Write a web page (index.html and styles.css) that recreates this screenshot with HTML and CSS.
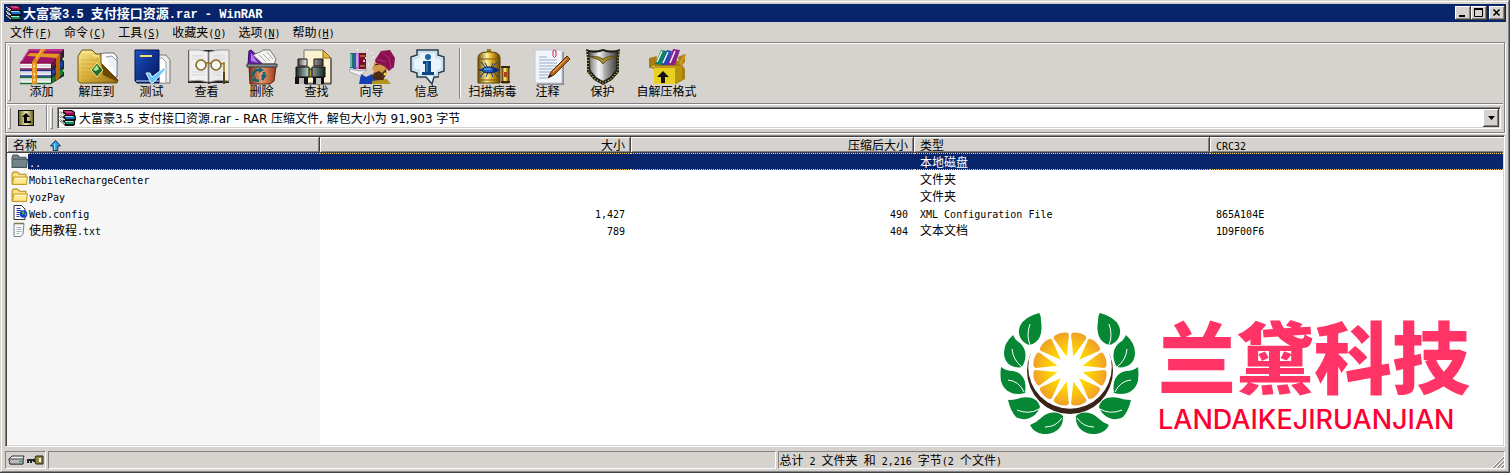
FILE: index.html
```html
<!DOCTYPE html>
<html lang="zh-CN">
<head>
<meta charset="utf-8">
<title>大富豪3.5 支付接口资源.rar - WinRAR</title>
<link rel="stylesheet" href="styles.css">
</head>
<body>
<svg class="defs" aria-hidden="true">
  <defs>
    <linearGradient id="gold" x1="0" y1="0" x2="1" y2="1"><stop offset="0" stop-color="#fbe68a"/><stop offset=".5" stop-color="#d9b13a"/><stop offset="1" stop-color="#8a6410"/></linearGradient>
    <linearGradient id="upbg" x1="0" y1="0" x2="1" y2="0"><stop offset="0" stop-color="#6b6428"/><stop offset=".5" stop-color="#f4edb4"/><stop offset="1" stop-color="#6b6428"/></linearGradient>
    <linearGradient id="blue" x1="0" y1="0" x2="1" y2="1"><stop offset="0" stop-color="#1a52c0"/><stop offset="1" stop-color="#03135c"/></linearGradient>
    <linearGradient id="clay"><stop offset="0" stop-color="#7c3014"/><stop offset=".45" stop-color="#ea9c72"/><stop offset="1" stop-color="#963a18"/></linearGradient>
    <linearGradient id="can"><stop offset="0" stop-color="#6f4a00"/><stop offset=".4" stop-color="#fff2a0"/><stop offset=".65" stop-color="#d9a41c"/><stop offset="1" stop-color="#5c3c00"/></linearGradient>
    <linearGradient id="steel"><stop offset="0" stop-color="#4c4c4c"/><stop offset=".35" stop-color="#f2f2f2"/><stop offset=".6" stop-color="#a4a4a4"/><stop offset="1" stop-color="#3c3c3c"/></linearGradient>
    <linearGradient id="barrel"><stop offset="0" stop-color="#1c2624"/><stop offset=".4" stop-color="#a9c4c0"/><stop offset="1" stop-color="#16201e"/></linearGradient>
    <radialGradient id="juice" gradientUnits="userSpaceOnUse" cx="70" cy="57" r="37"><stop offset="0" stop-color="#fff200"/><stop offset=".5" stop-color="#ffd500"/><stop offset="1" stop-color="#f0a02a"/></radialGradient>
    <symbol id="books" viewBox="0 0 18 18">
      <path d="M4 1H13L16 3V6L17 8V11L16 12V16L14 17H6L4 14Z" fill="#111"/>
      <path d="M4 2H12L15 4H7Z" fill="#d8388c"/><path d="M7 4H15V6H7Z" fill="#a00050"/>
      <path d="M6 7H15L16 10H7Z" fill="#1673c8"/><path d="M6 7H14V8H6Z" fill="#9fdcff"/>
      <path d="M6 12H15V15H7Z" fill="#149068"/><path d="M6 12H14V13H6Z" fill="#9ff0d0"/>
      <path d="M1 3L6 6M1 7L6 11M1 11L6 15" stroke="#222" stroke-width="2"/>
      <path d="M1 3L6 6M1 7L6 11M1 11L6 15M2 5L5 7M2 9L5 11" stroke="#fff"/>
    </symbol>
    <symbol id="folder" viewBox="0 0 16 14">
      <path d="M1 3L2 1H6L8 3H14V12H1Z" fill="#fce38a" stroke="#b98a1c"/>
      <path d="M2.500 5.500H15.500L14.500 12.500H1.500Z" fill="#ffe98f" stroke="#c99a26"/><path d="M4 7H14" stroke="#fffbd8"/>
    </symbol>
    <path id="wedge" d="M70 44L62.300 24Q61.600 21.800 64 20.800Q70 18.600 76 20.800Q78.400 21.800 77.700 24Z"/>
    <g id="leaves">
      <path d="M39 1Q41 3 41 9C43 21 40 31 29 33C20 30 17 21 20 14Q24 5 39 1Z"/>
      <path d="M13 23Q15 28 20 31C27 37 27 47 22 55C12 57 4 51 4 41Q4 31 13 23Z"/>
      <path d="M1 55Q6 59 13 59C23 61 27 69 25 81C14 84 4 80 1 69Q0 62 1 55Z"/>
      <path d="M8 88Q15 88 20 86C29 84 38 86 40 95C36 106 25 110 16 105Q11 100 8 88Z"/>
      <path d="M30 113Q36 111 41 106C48 99 59 99 63 104C64 116 54 123 43 122Q34 121 30 113Z"/>
      <path d="M30 33Q26 23 30 12M22 55Q13 48 12 37M24 80Q19 69 8 68M39 97Q29 103 17 98M62 106Q56 115 45 115" fill="none" stroke="#fff" stroke-width="1"/>
    </g>
  </defs>
</svg>
<main class="window">
  <header class="titlebar">
    <svg class="app-icon"><use href="#books"/></svg>
    <h1>大富豪<span class="lt">3.5 </span>支付接口资源<span class="lt">.rar - WinRAR</span></h1>
    <div class="controls">
      <button aria-label="最小化"><svg viewBox="0 0 16 14"><path d="M4 10H10" stroke="#000" stroke-width="2"/></svg></button>
      <button aria-label="最大化"><svg viewBox="0 0 16 14"><path d="M3.500 2V10.500H11.500V2" fill="none" stroke="#000"/><path d="M3 3H12" stroke="#000" stroke-width="2"/></svg></button>
      <button class="close" aria-label="关闭"><svg viewBox="0 0 16 14"><path d="M4.500 3.500L10.500 9.500M10.500 3.500L4.500 9.500" stroke="#000" stroke-width="1.600"/></svg></button>
    </div>
  </header>

  <nav class="menu">
    <button>文件<span class="lt">(<u>F</u>)</span></button>
    <button>命令<span class="lt">(<u>C</u>)</span></button>
    <button>工具<span class="lt">(<u>S</u>)</span></button>
    <button>收藏夹<span class="lt">(<u>O</u>)</span></button>
    <button>选项<span class="lt">(<u>N</u>)</span></button>
    <button>帮助<span class="lt">(<u>H</u>)</span></button>
  </nav>

  <section class="rebar">
    <div class="band tools">
      <i class="grip"></i>
      <button><svg viewBox="0 0 48 36">
        <path d="M33 14L46 0V8L44 10L46 12V20L44 22L46 23V27L33 35Z" fill="#222"/>
        <path d="M34 15L44 4V8L34 19Z" fill="#7d1246"/><path d="M34 22L45 11V17L34 27Z" fill="#1c3f9e"/><path d="M34 29L45 19V25L34 34Z" fill="#147a34"/>
        <path d="M2 14L11 0H46L34 14Z" fill="#9b1466"/><path d="M4 12L11 1H44" stroke="#d75aa8" fill="none"/>
        <path d="M3 14H33V20H3Z" fill="#f7f7f7"/><path d="M2 14H33M2 20H33" stroke="#8c0f4c" stroke-width="1.500"/>
        <path d="M3 21H33V27H3Z" fill="#f2f2f8"/><path d="M2 21.500H33M2 27H33" stroke="#1c3090" stroke-width="1.500"/>
        <path d="M3 29H33V34H3Z" fill="#f2f8f2"/><path d="M2 28.500H33M2 34.500H33" stroke="#137032" stroke-width="1.500"/>
        <path d="M3 17H33M3 24H33M3 31H33" stroke="#c4c4cc"/>
        <path d="M14 13L23 0H28L19 13V35H14Z" fill="#e08a1e"/><path d="M9 7L12 4L42 5L39 9Z" fill="#e69624"/><path d="M38 9L42 5V28L38 32Z" fill="#b8660e"/>
        <path d="M16 14V34M24 0L18 10" stroke="#ffcc66"/><circle cx="16.500" cy="17" r="1" fill="#fff08a"/><circle cx="16.500" cy="25" r="1" fill="#fff08a"/><circle cx="16.500" cy="31" r="1" fill="#fff08a"/>
      </svg>添加</button>
      <button><svg viewBox="0 0 48 36">
        <path d="M27 5L31 4H41L44 8V28H27Z" fill="#fff" stroke="#68707c"/><path d="M33 8L39 7L44 12V27" fill="#eef2f8" stroke="#8a94a2"/>
        <path d="M5 7L9 1H19L23 5H28V14L45 31L44 34H7L5 32Z" fill="url(#gold)" stroke="#6f5212"/>
        <path d="M9 3H18L21 7H26" stroke="#fff6b8" fill="none"/><path d="M8 11H25M8 15H27M8 19H29M8 23H31M8 27H36M8 31H41" stroke="#c89b30" opacity=".6"/>
        <path d="M28 14L45 31V33L30 26Z" fill="#6b4a08"/>
        <path d="M24 14L30 21L24 28L18 21Z" fill="#256b2c" stroke="#f4e7a0"/><path d="M24 16L26 20L23 22L20 21Z" fill="#a4e898"/>
      </svg>解压到</button>
      <button><svg viewBox="0 0 48 36">
        <path d="M30 6H38L42 11V34H30Z" fill="#eee" stroke="#777"/><path d="M30 9H34L38 13V34H30Z" fill="#fff" stroke="#999"/>
        <path d="M7 1H31V34H9L7 32Z" fill="url(#blue)" stroke="#021050"/><path d="M8 32H31" stroke="#dfe6f5"/>
        <path d="M12 7H24" stroke="#f2df6c" stroke-width="2"/>
        <path d="M18 24L22 24L24 28L36 19L38 20L25 34H23Z" fill="#65c7f7" stroke="#e8f7ff"/>
      </svg>测试</button>
      <button><svg viewBox="0 0 48 36">
        <path d="M5 1V34H24L26 35L28 34H46V1" fill="#222"/>
        <path d="M6 1Q17 0 25 3V33Q16 30 6 32Z" fill="#f0f0f0" stroke="#aaa"/><path d="M46 1Q34 0 26 3V33Q35 30 46 32Z" fill="#ececec" stroke="#999"/>
        <path d="M25.500 3V33" stroke="#777"/><path d="M9 7H21M9 10H21M9 23H22M9 26H22M30 7H42M30 10H42M30 23H38M30 26H38" stroke="#d3d3d3"/>
        <circle cx="18" cy="16" r="5" fill="#fff" fill-opacity=".6" stroke="#87651a" stroke-width="1.600"/><circle cx="33" cy="16" r="5" fill="#fff" fill-opacity=".6" stroke="#87651a" stroke-width="1.600"/>
        <path d="M23 15Q25 12 28 15M38 15L41 14V34" fill="none" stroke="#9b751c" stroke-width="1.600"/><path d="M41 23V35" stroke="#5a430c" stroke-width="2"/>
      </svg>查看</button>
      <button><svg viewBox="0 0 48 36">
        <path d="M11 2L13 1L29 16H10Z" fill="#6a1bb4" stroke="#2d0758"/><path d="M13 4V12L20 14Z" fill="#b57be8"/>
        <path d="M15 6L22 3L25 1H32L38 10L36 15H25Z" fill="#f4f4f4" stroke="#777"/><path d="M21 6L28 13M25 5L32 12M29 3L35 10" stroke="#aaa"/>
        <path d="M11 17H38L36 32L32 35H12Z" fill="url(#clay)" stroke="#5c2009"/>
        <path d="M9 15H39V18H9Z" fill="#8a8f98" stroke="#333"/>
        <path d="M15 28L15 25L18 21L22 21M26 23L26 28L24 31M21 32L17 31" fill="none" stroke="#0f6674" stroke-width="2.500"/><path d="M21 18L26 21L21 24ZM29 26L25 31L23 26ZM13 31L18 28V33Z" fill="#0f6674"/>
      </svg>删除</button>
      <button><svg viewBox="0 0 48 36">
        <path d="M11 1H30L38 9V34H11Z" fill="#fbf3cf" stroke="#777"/><path d="M38 9V35H12" fill="none" stroke="#333"/><path d="M30 1V9H38Z" fill="#e6b93c" stroke="#8a6a18"/>
        <path d="M5 10H14V17H5ZM21 10H30V17H21Z" fill="url(#steel)" stroke="#111"/>
        <path d="M15 20H20V28H15Z" fill="#b59a1e" stroke="#222"/>
        <path d="M3 18H16V28H3ZM19 18H32V28H19Z" fill="url(#barrel)" stroke="#111"/>
        <path d="M2 28H15V35H2ZM20 28H31V35H20Z" fill="#111"/><path d="M6 29H11V35H6ZM23 29H28V35H23Z" fill="#bbb"/>
      </svg>查找</button>
      <button><svg viewBox="0 0 48 36">
        <path d="M2 4H8V19H2Z" fill="#157a5c"/><path d="M5 4H9V20H5Z" fill="#2c57b8"/><path d="M8 4H12V20H8Z" fill="#bb65c4"/><path d="M11 4H18V20H11Z" fill="#7c0d30"/><path d="M3 5V18M9 5V18" stroke="#c8f0ff"/><path d="M12 7H17M12 17H17" stroke="#d8aa42"/>
        <path d="M1 20L12 22L19 21L14 25L15 30L10 26L2 23Z" fill="#f1f1f7" stroke="#888" stroke-width=".600"/>
        <path d="M11 35L13 25L18 28L24 25L34 29L42 35Z" fill="#143fae"/><path d="M24 32L39 30L43 35H24Z" fill="#b49322"/>
        <path d="M27 12L38 14L39 25L31 31L24 26L26 22L24 20Z" fill="#d39a4a"/><path d="M26 24L31 22L34 24L38 20V26L35 31H28L24 28Z" fill="#4a2a12"/><path d="M27 16L31 15" stroke="#301808"/>
        <path d="M27 11L33 2L42 1L47 9L46 18L41 22L36 17L28 14Z" fill="#8c0f50"/><path d="M34 3L41 9L43 20M29 10L38 13" fill="none" stroke="#b02c74"/><circle cx="37" cy="25" r="1.500" fill="#f5dc57"/>
        <path d="M9 1H10M14 0H15M19 1H20M23 4H24M25 8H26M15 12H17M20 15H21M17 9H18" stroke="#fff" stroke-width="1.500"/>
      </svg>向导</button>
      <button><svg viewBox="0 0 48 36">
        <path d="M14 1H35V6L41 8V22L35 24V28H31L29 35L23 28H14V24L8 22V8L14 6Z" fill="#eaf5fb" stroke="#263c4c" stroke-width="1.500"/>
        <path d="M16 3H33V8L39 10V20L34 22V26H16V22L10 20V10L16 8Z" fill="none" stroke="#c7e0ec" stroke-width="2"/>
        <circle cx="25" cy="8" r="3" fill="#176aa5"/><path d="M20 12H28V23H31V26H19V23H22V15H20Z" fill="#0e4687"/><path d="M24 13V23" stroke="#4da3d6"/>
      </svg>信息</button>
      <i class="split"></i>
      <button><svg viewBox="0 0 48 36">
        <path d="M18 0H22V4H18Z" fill="#a57a12"/><path d="M9 9Q9 3 18 3H22Q31 3 31 9V34H9Z" fill="url(#can)" stroke="#5c4200"/><path d="M9 10H31M9 31H31" stroke="#7a5808"/>
        <path d="M33 18H40V34H33Z" fill="url(#can)" stroke="#553b00"/><path d="M32 18H41M32 33H41" stroke="#3a2800" stroke-width="2"/><path d="M35 23H38V28H35Z" fill="#b83c18"/>
        <path d="M12 13L17 19L10 21L16 22L11 28M28 13L23 19L30 21L24 22L29 28M16 14L19 19M24 14L22 19M17 28L19 23M24 28L22 23" fill="none" stroke="#123a7a"/>
        <ellipse cx="20" cy="21" rx="7" ry="3" fill="#1c5cc0" stroke="#071e52"/><circle cx="26" cy="21" r="2.500" fill="#0b2c74"/><path d="M15 20H22" stroke="#80c4ff"/>
      </svg>扫描病毒</button>
      <button><svg viewBox="0 0 48 36">
        <path d="M13 3H40V36H13Z" fill="#8a8e98"/><path d="M11 1H38V34H11Z" fill="#f2f6fc" stroke="#c0c8d8"/>
        <path d="M15 8H23M15 11H33M15 14H33M15 17H33M15 20H30M15 23H28M15 26H24M15 29H23" stroke="#96aacb"/>
        <path d="M29 7V2Q30.500 0 32 2V7Q30.500 10 29 7" fill="none" stroke="#d02840"/>
        <path d="M43 7L46 10L30 26L24 29L27 23Z" fill="#b8691c" stroke="#5e2f08"/><path d="M42 10L29 23" stroke="#f0b468"/><path d="M24 29L26 25L28 27Z" fill="#222"/>
      </svg>注释</button>
      <button><svg viewBox="0 0 48 36">
        <path d="M7 0Q15 3 24 0Q33 3 41 0L40 9V23L33 31L24 36L15 31L8 23V9Z" fill="#1d1d16"/>
        <path d="M10 3Q17 5 24 2Q31 5 38 3L37 21L31 28L24 32L17 28L11 21Z" fill="url(#steel)"/>
        <path d="M24 10V32L18 28L12 21L11 8Z" fill="#fff" opacity=".25"/><path d="M9 7L20 8L24 10L28 8L39 7L28 11L24 15L20 11Z" fill="#a78c2a" stroke="#423508" stroke-width=".700"/>
        <path d="M8 2L9 10L9 22L16 30L24 34L32 30L39 22L39 10L40 2" fill="none" stroke="#dbe06a" stroke-width="1.300" stroke-dasharray="1 2"/>
      </svg>保护</button>
      <button class="wide"><svg viewBox="0 0 48 36">
        <path d="M6 9L14 7L12 17L6 18ZM35 8L42 5V13L37 18Z" fill="#a97f10"/>
        <path d="M6 18L13 10L37 12L40 17L42 20V30L33 35H11V20Z" fill="#a97f10"/>
        <path d="M12 15L18 1L24 2L20 16Z" fill="#12805c"/><path d="M18 16L24 1L29 2L25 16Z" fill="#244bb0"/><path d="M24 16L30 0L37 1L32 16Z" fill="#881d8c"/><path d="M14 13L19 2M20 14L25 3M27 14L32 2" stroke="#e6f2ff" stroke-width="1.500"/>
        <path d="M36 13L42 5L43 6L38 17Z" fill="#c79c20"/><path d="M6 18L12 15V17H36L38 19H10Z" fill="#d9b12c" stroke="#8a6808" stroke-width=".600"/>
        <path d="M11 19H32V35H11Z" fill="#e8d022"/><path d="M32 19L39 16V30L32 35Z" fill="#b8960c"/><path d="M18 34V28H14L20 22L26 28H22V34Z" fill="#111"/>
      </svg>自解压格式</button>
    </div>
    <div class="band address">
      <div class="up"><i class="grip"></i>
        <button aria-label="上一级"><svg viewBox="0 0 16 16"><path d="M0 0H16V16H0Z" fill="#111"/><path d="M1 1H15V15H1Z" fill="url(#upbg)"/><path d="M8 3L12 7H9V11H13V13H6V7H4Z" fill="#000"/></svg></button>
      </div>
      <i class="grip"></i>
      <div class="combo">
        <svg class="app-icon"><use href="#books"/></svg>
        <select aria-label="地址"><option>大富豪3.5 支付接口资源.rar - RAR 压缩文件, 解包大小为 91,903 字节</option></select>
        <i class="drop"><svg viewBox="0 0 9 5"><path d="M1 0H8L4.500 4Z"/></svg></i>
      </div>
    </div>
  </section>

  <section class="list">
    <table>
      <colgroup><col class="c-icon"><col class="c-name"><col class="c-size"><col class="c-packed"><col class="c-type"><col></colgroup>
      <thead><tr>
        <th colspan="2">名称<svg class="sort" viewBox="0 0 12 12"><path d="M6 .500L11.500 6.500H8.500V11.500H3.500V6.500H.500Z" fill="#27a5f2" stroke="#062a50"/><path d="M5 4V11" stroke="#b8ecff"/></svg></th>
        <th class="num">大小</th><th class="num">压缩后大小</th><th>类型</th><th class="last"><span class="lt">CRC32</span></th>
      </tr></thead>
      <tbody>
        <tr class="selected"><td class="icon"><svg viewBox="0 0 16 14"><path d="M1 3L2 1H6L8 3H14V5H15.500L14.500 12.500H1Z" fill="#74848a" stroke="#46565c"/><path d="M2 5H15" stroke="#4c5c60"/></svg></td><td class="name"><span class="lt">..</span></td><td></td><td></td><td>本地磁盘</td><td></td></tr>
        <tr><td class="icon"><svg><use href="#folder"/></svg></td><td class="name"><span class="lt">MobileRechargeCenter</span></td><td></td><td></td><td>文件夹</td><td></td></tr>
        <tr><td class="icon"><svg><use href="#folder"/></svg></td><td class="name"><span class="lt">yozPay</span></td><td></td><td></td><td>文件夹</td><td></td></tr>
        <tr><td class="icon"><svg viewBox="0 0 16 15"><path d="M2.500 .500H10L13.500 4V14.500H2.500Z" fill="#fff" stroke="#333"/><path d="M5 3.500H9M5 5.500H10M5 7.500H9M5 9.500H8M5 11.500H8" stroke="#2233a0"/><circle cx="12" cy="9" r="3.800" fill="#1b3fc0"/><path d="M10 7L12 6L13 8L11 10ZM13 9L15 8L14 11Z" fill="#39c23c"/></svg></td><td class="name"><span class="lt">Web.config</span></td><td class="num"><span class="lt">1,427</span></td><td class="num"><span class="lt">490</span></td><td><span class="lt">XML Configuration File</span></td><td><span class="lt">865A104E</span></td></tr>
        <tr><td class="icon"><svg viewBox="0 0 16 15"><path d="M2.500 1.500H12.500L11.500 12L9.500 14.500H2.500Z" fill="#f6fafa" stroke="#70868c"/><path d="M3 1.500H13" stroke="#8a6a30" stroke-width="2" stroke-dasharray="1 1"/><path d="M5 5.500H10M5 7.500H10M5 9.500H10M5 11.500H8" stroke="#a4b4ba"/></svg></td><td class="name">使用教程<span class="lt">.txt</span></td><td class="num"><span class="lt">789</span></td><td class="num"><span class="lt">404</span></td><td>文本文档</td><td><span class="lt">1D9F00F6</span></td></tr>
      </tbody>
    </table>
    <div class="filler"></div>
    <aside class="brand">
      <svg viewBox="0 0 140 122" aria-hidden="true">
        <circle cx="70" cy="59" r="43" fill="#3a2418"/><circle cx="70" cy="55" r="41.800" fill="#fff"/>
        <g fill="url(#juice)">
          <use href="#wedge" transform="rotate(15 70 57)"/><use href="#wedge" transform="rotate(45 70 57)"/><use href="#wedge" transform="rotate(75 70 57)"/>
          <use href="#wedge" transform="rotate(105 70 57)"/><use href="#wedge" transform="rotate(135 70 57)"/><use href="#wedge" transform="rotate(165 70 57)"/>
          <use href="#wedge" transform="rotate(195 70 57)"/><use href="#wedge" transform="rotate(225 70 57)"/><use href="#wedge" transform="rotate(255 70 57)"/>
          <use href="#wedge" transform="rotate(285 70 57)"/><use href="#wedge" transform="rotate(315 70 57)"/><use href="#wedge" transform="rotate(345 70 57)"/>
        </g>
        <g fill="#058734"><use href="#leaves"/><use href="#leaves" transform="translate(139 0) scale(-1 1)"/></g>
      </svg>
      <div class="brand-text"><strong>兰黛科技</strong><span>LANDAIKEJIRUANJIAN</span></div>
    </aside>
  </section>

  <footer class="status">
    <div class="icons"><svg viewBox="0 0 36 12"><path d="M1 5L4 2H16L15 5V10H2Z" fill="#eee" stroke="#333"/><path d="M1 5H15V10H2Z" fill="#bbb" stroke="#444"/><path d="M11 7.500H14" stroke="#0b8" stroke-width="1.500"/><path d="M19 6H29M20 6V9M23 6V9M26 6V8" stroke="#222" stroke-width="2"/><path d="M28 2H35V10H28L27 8V4Z" fill="#8c883c" stroke="#222"/><path d="M31 4H33V8H31Z" fill="#eee"/></svg></div>
    <div></div>
    <div>总计<span class="lt"> 2 </span>文件夹<span class="lt"> </span>和<span class="lt"> 2,216 </span>字节<span class="lt">(2 </span>个文件<span class="lt">)</span>
      <svg class="sizer" viewBox="0 0 12 12"><path d="M1 12L12 1M5 12L12 5M9 12L12 9" stroke="#808080" stroke-width="1.500"/><path d="M0 12L12 0M4 12L12 4M8 12L12 8" stroke="#fff"/></svg></div>
  </footer>
</main>
</body>
</html>
```
FILE: styles.css
```css
* { box-sizing: border-box; }
body {
  margin: 0;
  font: 12px/16px "Noto Sans CJK SC", sans-serif;
  color: #000;
  background: #d6d3ce;
}
button, select { font: inherit; color: inherit; margin: 0; }
svg { display: block; }
.defs { position: absolute; width: 0; height: 0; }
.lt { font-family: "DejaVu Sans Mono", monospace; font-size: 10px; line-height: 1; white-space: pre; }

.window {
  display: flex;
  flex-direction: column;
  min-height: 100vh;
  padding: 4px;
  box-shadow: inset -1px -1px #424142, inset 1px 1px #d6d3ce, inset -2px -2px #848284, inset 2px 2px #fff;
}

.titlebar { display: flex; align-items: center; height: 18px; background: #08246b; color: #fff; }
.app-icon { flex: none; width: 18px; height: 18px; }
.titlebar .app-icon { margin-left: 1px; }
h1 { flex: 1; margin: 0; font-size: 13px; line-height: 18px; font-weight: 700; }
h1 .lt { font-family: "Liberation Mono", monospace; font-size: 12px; }
.controls { display: flex; padding-right: 1px; }
.controls button, .drop {
  padding: 0;
  border: 0;
  background: #d6d3ce;
  box-shadow: inset -1px -1px #424142, inset 1px 1px #fff, inset -2px -2px #848284;
}
.controls button { width: 16px; height: 14px; }
.controls svg { width: 16px; height: 14px; }
.controls .close { margin-left: 2px; }

.menu { display: flex; height: 20px; }
.menu button { padding: 0 6px; border: 0; background: none; white-space: nowrap; }

.rebar { border: 1px solid #848284; box-shadow: 1px 1px #fff, inset 1px 1px #fff; margin: 0 1px 2px; padding: 1px; }
.band { display: flex; }
.grip { flex: none; width: 3px; margin: 2px 0; border: 1px solid; border-color: #fff #848284 #848284 #fff; }
.tools { height: 60px; padding-left: 1px; border-bottom: 1px solid #848284; box-shadow: 0 1px #fff; }
.tools .grip { margin-right: 3px; }
.tools button {
  display: flex;
  flex-direction: column;
  align-items: center;
  width: 55px;
  padding: 5px 0 0;
  border: 0;
  background: none;
  line-height: 12px;
  white-space: nowrap;
}
.tools button svg { width: 48px; height: 36px; }
.tools .wide { width: 73px; }
.split { width: 2px; margin: 4px 4px 4px 5px; border-left: 1px solid #848284; border-right: 1px solid #fff; }

.address { height: 27px; padding: 1px 2px 0 1px; }
.up { display: flex; align-items: center; width: 39px; border-right: 1px solid #848284; box-shadow: 1px 0 #fff; margin-right: 3px; }
.up .grip { align-self: stretch; }
.up button { padding: 0; border: 0; background: none; margin-left: 7px; }
.up svg { width: 16px; height: 16px; }
.combo {
  flex: 1;
  display: flex;
  align-items: center;
  height: 22px;
  margin: 2px 0 0 4px;
  padding-left: 1px;
  background: #fff;
  border: 1px solid;
  border-color: #848284 #fff #fff #848284;
  box-shadow: inset 1px 1px #424142, inset -1px -1px #d6d3ce;
}
.combo select {
  flex: 1;
  min-width: 0;
  height: 20px;
  padding: 2px 0 0 2px;
  border: 0;
  appearance: none;
  background: none;
  font-family: "DejaVu Sans", "Noto Sans CJK SC", sans-serif;
}
.drop { display: flex; align-items: center; justify-content: center; width: 16px; height: 18px; margin-right: 1px; }
.drop svg { width: 9px; height: 5px; }

.list {
  position: relative;
  flex: 1;
  display: flex;
  flex-direction: column;
  margin: 0 1px 4px;
  background: #fff;
  border: 1px solid;
  border-color: #848284 #fff #fff #848284;
  box-shadow: inset 1px 1px #424142, inset -1px -1px #d6d3ce;
  padding: 1px;
}
table { width: 100%; table-layout: fixed; border-collapse: separate; border-spacing: 0; }
.c-icon { width: 21px; }
.c-name { width: 292px; }
.c-size { width: 311px; }
.c-packed { width: 283px; }
.c-type { width: 296px; }
th, td { height: 17px; padding: 0 6px; line-height: 15px; text-align: left; white-space: nowrap; }
th {
  height: 16px;
  font-weight: 400;
  background: #d6d3ce;
  line-height: 14px;
  box-shadow: inset -1px -1px #424142, inset 1px 1px #fff, inset -2px -2px #848284;
}
.last { box-shadow: inset 0 -1px #424142, inset 1px 1px #fff, inset 0 -2px #848284; }
.num { text-align: right; }
.sort { display: inline-block; width: 11px; height: 11px; margin-left: 13px; vertical-align: -1px; }
.icon { padding: 0 0 0 4px; background: #f7f7f7; }
.icon svg { width: 17px; height: 15px; }
.name { padding: 0 0 0 1px; background: #f7f7f7; }
.selected td:not(.icon) {
  background: #08246b;
  color: #fff;
  line-height: 13px;
  border-top: 1px dotted #ffdb63;
  border-bottom: 1px dotted #ffdb63;
}
.filler { flex: 1; width: 313px; background: #f7f7f7; }

.brand { position: absolute; right: 32px; bottom: 10px; display: flex; align-items: flex-start; gap: 18px; color: #ff3366; }
.brand svg { width: 140px; height: 122px; }
.brand-text { display: flex; flex-direction: column; width: 314px; white-space: nowrap; }
.brand-text strong { font-size: 78px; line-height: 84px; font-weight: 900; }
.brand-text span { margin-top: 8px; font: 500 27px/32px Inter, sans-serif; color: #ff0033; }

.status { display: flex; gap: 2px; height: 18px; margin: 0 1px; }
.status > div {
  position: relative;
  flex: 1;
  padding-left: 1px;
  line-height: 16px;
  white-space: nowrap;
  border: 1px solid;
  border-color: #848284 #fff #fff #848284;
}
.status .icons { flex: none; width: 41px; padding: 2px 0 0 2px; }
.icons svg { width: 36px; height: 12px; }
.sizer { position: absolute; right: 0; bottom: 0; width: 12px; height: 12px; }
```
